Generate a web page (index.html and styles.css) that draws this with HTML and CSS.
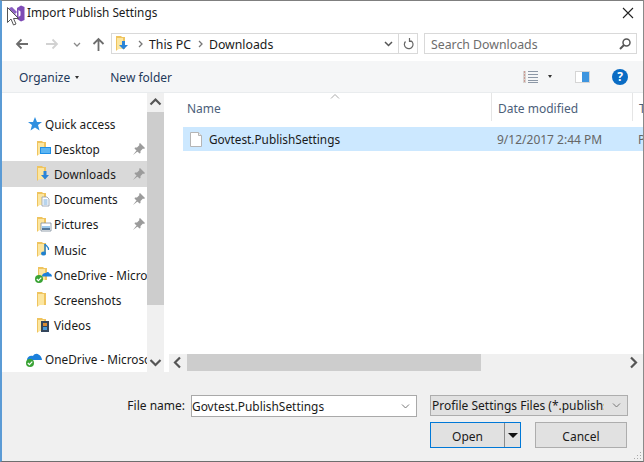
FILE: index.html
```html
<!DOCTYPE html>
<html lang="en">
<head>
    <meta charset="UTF-8">
    <title>Import Publish Settings</title>
    <link rel="stylesheet" href="styles.css">
</head>
<body>
    <svg width="0" height="0" class="defs">
        <symbol id="folder" viewBox="0 0 9 15">
            <path d="M0 0h5l1 1h3v12H2l-2 2z" fill="#efc45f"/>
            <path d="M1 2h6v11H3l-2 1z" fill="#fce6a0"/>
        </symbol>
        <symbol id="pin" viewBox="0 0 12 12">
            <path d="M7 0l5 5-1 1-1-.5L7.500 8 7.500 10 6.500 10.500 1.500 5.500 2 4.500 4 4.500 6.500 2 6 1zM3.500 7.500L0 12l4.500-3.500z" fill="#9b9b9b"/>
        </symbol>
        <symbol id="check" viewBox="0 0 8 8">
            <circle cx="4" cy="4" r="4" fill="#3aa335"/>
            <path d="M1.800 4l1.600 1.600L6.300 2.600" fill="none" stroke="#fff" stroke-width="1.200"/>
        </symbol>
    </svg>

    <div class="window">
        <header class="titlebar">
            <svg class="logo" width="17" height="17" viewBox="0 0 17 17">
                <path d="M1 4l8 9" stroke="#8a5fc0" stroke-width="2.500" fill="none"/>
                <path d="M1 3l3-1 5 5-2 2z" fill="#8a5fc0"/>
                <path d="M9 3l4-2.500 3.500 1.500v13l-3.500 1.500-4-2.500z" fill="#7d4bb5"/>
                <path d="M10.500 5v7l2-1.500v-4z" fill="#fff"/>
            </svg>
            <span class="title-text">Import Publish Settings</span>
            <svg class="close" width="12" height="12" viewBox="0 0 12 12">
                <path d="M1 1l10 10M11 1L1 11" stroke="#222" stroke-width="1.100"/>
            </svg>
        </header>

        <div class="navbar">
            <svg class="nav-icon back" width="14" height="12" viewBox="0 0 14 12">
                <path d="M13 6H2M6.500 1.500L2 6l4.500 4.500" fill="none" stroke="#6d6d6d" stroke-width="1.800"/>
            </svg>
            <svg class="nav-icon forward" width="14" height="12" viewBox="0 0 14 12">
                <path d="M1 6h11M7.500 1.500L12 6l-4.500 4.500" fill="none" stroke="#d2d2d2" stroke-width="1.800"/>
            </svg>
            <svg class="nav-icon recent" width="8" height="5" viewBox="0 0 8 5">
                <path d="M1 1l3 3 3-3" fill="none" stroke="#8a8a8a" stroke-width="1.300"/>
            </svg>
            <svg class="nav-icon up" width="13" height="14" viewBox="0 0 13 14">
                <path d="M6.500 14V2M1.500 7l5-5 5 5" fill="none" stroke="#6d6d6d" stroke-width="1.800"/>
            </svg>
            <div class="address">
                <svg class="addr-folder" width="14" height="15" viewBox="0 0 14 15">
                    <use href="#folder" width="9" height="15"/>
                    <path d="M6 5h3v4h3l-4.500 4.500L3 9h3z" fill="#2a84d8"/>
                </svg>
                <svg class="crumb-sep" width="5" height="8" viewBox="0 0 5 8"><path d="M1 1l3 3-3 3" fill="none" stroke="#777" stroke-width="1.300"/></svg>
                <span>This PC</span>
                <svg class="crumb-sep" width="5" height="8" viewBox="0 0 5 8"><path d="M1 1l3 3-3 3" fill="none" stroke="#777" stroke-width="1.300"/></svg>
                <span>Downloads</span>
                <svg class="addr-drop" width="9" height="6" viewBox="0 0 9 6"><path d="M1 1l3.500 3.500L8 1" fill="none" stroke="#555" stroke-width="1.500"/></svg>
                <div class="addr-refresh">
                    <svg width="11" height="12" viewBox="0 0 11 12"><path d="M7.500 2.500A4.300 4.300 0 1 1 2.500 3.500M6.500 0v3.500h3" fill="none" stroke="#666" stroke-width="1.200"/></svg>
                </div>
            </div>
            <div class="search">
                <span>Search Downloads</span>
                <svg width="12" height="12" viewBox="0 0 12 12"><circle cx="7.500" cy="4.500" r="3.500" fill="none" stroke="#555" stroke-width="1.500"/><path d="M5 7l-4 4" stroke="#555" stroke-width="2"/></svg>
            </div>
        </div>

        <div class="toolbar">
            <span class="tool organize">Organize</span>
            <i class="caret organize-caret"></i>
            <span class="tool">New folder</span>
            <svg class="views" width="16" height="14" viewBox="0 0 16 14">
                <path d="M0 1h3v12H0z" fill="#d8d4d0"/>
                <path d="M1 2h1M1 5h1M1 8h1M1 11h1" stroke="#c0605a"/>
                <path d="M5 1.500h10M5 4.500h10M5 7.500h10M5 10.500h10M5 12.500h10" stroke="#8c97a6"/>
            </svg>
            <i class="caret views-caret"></i>
            <svg class="pane" width="15" height="12" viewBox="0 0 15 12">
                <rect width="15" height="12" fill="#d5d5d5"/>
                <rect x="1" y="1" width="6" height="10" fill="#fff"/>
                <rect x="7" y="1" width="7" height="10" fill="#3e95df"/>
            </svg>
            <div class="help">?</div>
        </div>

        <div class="panes">
            <nav class="sidebar">
                <div class="tree">
                    <div class="row top quick">
                        <svg class="row-icon" width="14" height="14" viewBox="0 0 14 14"><path d="M7 0l2 5h5l-4 3 1.500 5.500L7 10.500 2.500 13.500 4 8 0 5h5z" fill="#2f8fe0"/></svg>
                        <span>Quick access</span>
                    </div>
                    <div class="row">
                        <svg class="row-icon" width="15" height="15" viewBox="0 0 15 15"><use href="#folder" width="9" height="15"/><path d="M3 6h11v7H3z" fill="#1f8fe6"/><path d="M4 7h9v5H4z" fill="#5cb5f2"/></svg>
                        <span>Desktop</span>
                        <svg class="pin" width="12" height="12"><use href="#pin"/></svg>
                    </div>
                    <div class="row active">
                        <svg class="row-icon" width="15" height="15" viewBox="0 0 15 15"><use href="#folder" width="9" height="15"/><path d="M6.500 5h3v4H12l-4 4.500L4 9h2.500z" fill="#2a84d8"/></svg>
                        <span>Downloads</span>
                        <svg class="pin" width="12" height="12"><use href="#pin"/></svg>
                    </div>
                    <div class="row">
                        <svg class="row-icon" width="15" height="15" viewBox="0 0 15 15"><use href="#folder" width="9" height="15"/><path d="M5 5h5l2 2v7H5z" fill="#fff" stroke="#8d9bab" stroke-width=".8"/><path d="M6.500 8h4M6.500 10h4M6.500 12h4" stroke="#4d93d0" stroke-width=".8"/></svg>
                        <span>Documents</span>
                        <svg class="pin" width="12" height="12"><use href="#pin"/></svg>
                    </div>
                    <div class="row">
                        <svg class="row-icon" width="15" height="15" viewBox="0 0 15 15"><use href="#folder" width="9" height="15"/><path d="M4 6h10v8H4z" fill="#fff" stroke="#7c8a99" stroke-width=".8"/><path d="M5 9h8v2H5z" fill="#9cc9ec"/><path d="M5 11h8v2H5z" fill="#55799b"/></svg>
                        <span>Pictures</span>
                        <svg class="pin" width="12" height="12"><use href="#pin"/></svg>
                    </div>
                    <div class="row">
                        <svg class="row-icon" width="15" height="15" viewBox="0 0 15 15"><use href="#folder" width="9" height="15"/><path d="M8 2v9.500" stroke="#1f80d0" stroke-width="1.400"/><ellipse cx="6.500" cy="11.500" rx="2.500" ry="2" fill="#1f80d0"/><path d="M8 2c1 2 4 2.500 3.500 6" fill="none" stroke="#1f80d0" stroke-width="1.200"/></svg>
                        <span>Music</span>
                    </div>
                    <div class="row">
                        <svg class="row-icon wide" width="17" height="16" viewBox="0 0 17 16"><use href="#folder" x="3" width="9" height="15"/><path d="M7 9c0-2 2-3.500 4-3 1-1.500 3-1 3.500 .5C16 6.500 17 8 17 9.500H7z" fill="#1c80dc"/><use href="#check" y="8" width="8" height="8"/></svg>
                        <span>OneDrive - Microsoft</span>
                    </div>
                    <div class="row">
                        <svg class="row-icon" width="15" height="15" viewBox="0 0 15 15"><use href="#folder" width="9" height="15"/></svg>
                        <span>Screenshots</span>
                    </div>
                    <div class="row">
                        <svg class="row-icon" width="15" height="15" viewBox="0 0 15 15"><use href="#folder" width="9" height="15"/><path d="M4 3h8v11H4z" fill="#33465c"/><path d="M6 5h4v3H6z" fill="#d78b32"/><path d="M6 9h4v3H6z" fill="#4a9bd8"/></svg>
                        <span>Videos</span>
                    </div>
                    <div class="row top drive">
                        <svg class="row-icon drive-icon" width="16" height="15" viewBox="0 0 16 15"><path d="M1 8c0-3 3-5 6-4 1-2 4-3 5.500-1.500C14 3 16 5.500 16 8z" fill="#1c80dc"/><use href="#check" y="7" width="8" height="8"/></svg>
                        <span>OneDrive - Microsoft</span>
                    </div>
                </div>
                <div class="vscroll">
                    <svg class="scroll-arrow" width="17" height="19" viewBox="0 0 17 19"><path d="M3.500 11.500l5-5 5 5" fill="none" stroke="#555" stroke-width="2.200"/></svg>
                    <div class="vthumb"></div>
                    <div class="vtrack"></div>
                    <svg class="scroll-arrow" width="17" height="19" viewBox="0 0 17 19"><path d="M3.500 7l5 5 5-5" fill="none" stroke="#555" stroke-width="2.200"/></svg>
                </div>
            </nav>

            <section class="files">
                <div class="columns">
                    <svg class="sort" width="10" height="5" viewBox="0 0 10 5"><path d="M1 4.500l4-4 4 4" fill="none" stroke="#aaa"/></svg>
                    <div class="col col-name">Name</div>
                    <div class="col col-date">Date modified</div>
                    <div class="col col-type">Type</div>
                </div>
                <div class="file-row">
                    <div class="col-name file-name">
                        <svg width="12" height="15" viewBox="0 0 12 15"><path d="M.5.500h8l3 3v11H.500z" fill="#fff" stroke="#b5b5b5"/><path d="M8.500.500v3h3" fill="#eee" stroke="#b5b5b5"/></svg>
                        <span>Govtest.PublishSettings</span>
                    </div>
                    <div class="col-date file-meta">9/12/2017 2:44 PM</div>
                    <div class="col-type file-meta">PUBLISHSETTINGS</div>
                </div>
                <div class="files-empty"></div>
                <div class="hscroll">
                    <svg width="18" height="17" viewBox="0 0 18 17"><path d="M11 3.500l-5 5 5 5" fill="none" stroke="#555" stroke-width="2.200"/></svg>
                    <div class="hthumb"></div>
                    <div class="htrack"></div>
                    <svg width="18" height="17" viewBox="0 0 18 17"><path d="M6 3.500l5 5-5 5" fill="none" stroke="#555" stroke-width="2.200"/></svg>
                </div>
            </section>
        </div>

        <footer class="bottom">
            <div class="bottom-row">
                <label class="file-label">File name:</label>
                <div class="name-input">
                    <span>Govtest.PublishSettings</span>
                    <svg width="9" height="5" viewBox="0 0 9 5"><path d="M1 .5l3.500 3.500L8 .5" fill="none" stroke="#777"/></svg>
                </div>
                <div class="filter">
                    <span>Profile Settings Files (*.publishsettings)</span>
                    <svg width="9" height="5" viewBox="0 0 9 5"><path d="M1 .5l3.500 3.500L8 .5" fill="none" stroke="#777"/></svg>
                </div>
            </div>
            <div class="button-row">
                <div class="btn-open">
                    <span class="open-label">Open</span>
                    <div class="open-drop"><i class="drop-tri"></i></div>
                </div>
                <div class="btn-cancel">Cancel</div>
            </div>
            <svg class="grip" width="9" height="9" viewBox="0 0 9 9">
                <path d="M7 1h1v1H7zM4 4h1v1H4zM7 4h1v1H7zM1 7h1v1H1zM4 7h1v1H4zM7 7h1v1H7z" fill="#a9a9a9"/>
            </svg>
        </footer>

        <svg class="cursor" width="13" height="19" viewBox="0 0 13 19">
            <path d="M.5.500v15l3.500-3.500 2.500 6 2.500-1-2.500-5.500h5z" fill="#fff" stroke="#555"/>
        </svg>
    </div>
</body>
</html>
```

FILE: styles.css
```css
*{
    box-sizing: border-box;
}
html, body{
    height: 100%;
}
body{
    margin: 0;
    overflow: hidden;
    background-color: white;
    color: #1a1a1a;
    font-family: 'Noto Sans', 'Open Sans', sans-serif;
    font-size: 12px;
}
.defs{
    position: absolute;
}

.window{
    position: relative;
    width: 644px;
    height: 462px;
    display: flex;
    flex-direction: column;
    border-top: 1px solid #7f7f7f;
    border-right: 1px solid #8a8a8a;
    border-bottom: 1px solid #6e6e6e;
    border-left: 2px solid #5b9bd5;
    overflow: hidden;
}

/* title */
.titlebar{
    height: 29px;
    display: flex;
    align-items: center;
    flex: none;
    padding-left: 6px;
}
.logo{
    margin-right: 2px;
    margin-top: -5px;
}
.title-text{
    margin-top: -8px;
    font-size: 11.8px;
}
.close{
    margin-left: auto;
    margin-right: 9px;
    margin-top: -6px;
}

/* back, forward, address, search */
.navbar{
    height: 31px;
    flex: none;
    display: flex;
    align-items: flex-start;
    padding-top: 3px;
}
.nav-icon{
    flex: none;
    margin-top: 5px;
}
.back{
    margin-left: 13px;
}
.forward{
    margin-left: 16px;
}
.recent{
    margin-left: 14px;
    margin-top: 9px;
}
.up{
    margin-left: 11px;
    margin-top: 4px;
}
.address{
    margin-left: 6px;
    width: 307px;
    height: 21px;
    border: 1px solid #d9d9d9;
    display: flex;
    align-items: center;
    padding-left: 4px;
    font-size: 12.3px;
}
.addr-folder{
    margin-right: 8px;
}
.crumb-sep{
    margin: 0 6px 0 0;
}
.address span{
    margin-right: 7px;
    padding-top: 1px;
}
.addr-drop{
    margin-left: auto;
    margin-right: 5px;
}
.addr-refresh{
    width: 19px;
    height: 100%;
    border-left: 1px solid #d9d9d9;
    display: flex;
    align-items: center;
    justify-content: center;
}
.search{
    margin-left: 6px;
    width: 213px;
    height: 21px;
    border: 1px solid #d9d9d9;
    display: flex;
    align-items: center;
    justify-content: space-between;
    padding: 0 5px 0 6px;
    color: #6d6d6d;
    font-size: 12.3px;
}
.search span{
    padding-top: 1px;
}

/* command bar */
.toolbar{
    height: 32px;
    flex: none;
    display: flex;
    align-items: center;
    background-color: #f5f6f7;
    border-bottom: 1px solid #e9ecee;
    color: #1e395b;
    padding-left: 17px;
}
.tool{
    padding-top: 2px;
}
.organize-caret{
    margin: 2px 31px 0 5px;
}
.caret{
    width: 0;
    height: 0;
    border-left: 2.5px solid transparent;
    border-right: 2.5px solid transparent;
    border-top: 3px solid #333;
}
.views{
    margin-left: 351px;
}
.views-caret{
    margin-left: 9px;
}
.pane{
    margin-left: 23px;
}
.help{
    margin-left: 22px;
    width: 16px;
    height: 16px;
    border-radius: 50%;
    background-color: #0a6cc4;
    color: white;
    font-weight: bold;
    font-size: 12px;
    line-height: 16px;
    text-align: center;
}

/* main panes */
.panes{
    flex: 1;
    min-height: 0;
    display: flex;
}
.sidebar{
    width: 162px;
    flex: none;
    display: flex;
}
.tree{
    width: 145px;
    flex: none;
    padding-top: 18px;
    overflow: hidden;
    font-size: 11.8px;
}
.row{
    height: 25.2px;
    display: flex;
    align-items: center;
    padding-left: 35px;
    white-space: nowrap;
    overflow: hidden;
}
.row-icon{
    flex: none;
    margin-right: 2px;
}
.row span{
    flex: none;
}
.row-icon.wide{
    margin-left: -2px;
}
.row.top{
    padding-left: 26px;
}
.row.quick .row-icon{
    margin-right: 3px;
}
.row.drive{
    margin-top: 9px;
    padding-left: 24px;
}
.row .drive-icon{
    margin-right: 3px;
}
.row.active{
    background-color: #d9d9d9;
}
.pin{
    position: absolute;
    left: 131px;
}
.vscroll{
    width: 17px;
    flex: none;
    display: flex;
    flex-direction: column;
    background-color: #f0f0f0;
}
.scroll-arrow{
    flex: none;
}
.vthumb{
    height: 193px;
    flex: none;
    background-color: #cdcdcd;
}
.vtrack{
    flex: 1;
}

.files{
    flex: 1;
    min-width: 0;
    display: flex;
    flex-direction: column;
    overflow: hidden;
}
.columns{
    position: relative;
    height: 29px;
    flex: none;
    display: flex;
    color: #4c607a;
    margin-left: 19px;
}
.sort{
    position: absolute;
    left: 147px;
    top: 1px;
}
.col{
    height: 28px;
    padding-top: 7px;
    white-space: nowrap;
}
.col-name{
    width: 308px;
    flex: none;
    padding-left: 4px;
}
.col-date{
    width: 141px;
    flex: none;
    padding-left: 6px;
    white-space: nowrap;
}
.col-type{
    width: 100px;
    flex: none;
    padding-left: 6px;
    white-space: nowrap;
}
.col.col-date, .col.col-type{
    border-left: 1px solid #e5e5e5;
}
.file-row{
    height: 24px;
    flex: none;
    display: flex;
    align-items: center;
    margin-top: 5px;
    margin-left: 19px;
    background-color: #cce8ff;
}
.file-name{
    display: flex;
    align-items: center;
    gap: 7px;
    padding-left: 7px;
    font-size: 11.8px;
}
.file-meta{
    color: #666;
}
.files-empty{
    flex: 1;
}
.hscroll{
    height: 18px;
    flex: none;
    display: flex;
    background-color: #f0f0f0;
    margin-left: 5px;
}
.hthumb{
    width: 294px;
    flex: none;
    background-color: #cdcdcd;
    margin-bottom: 1px;
}
.htrack{
    flex: 1;
}

/* bottom form */
.bottom{
    position: relative;
    height: 89px;
    flex: none;
    background-color: #f0f0f0;
    padding-top: 23px;
}
.bottom-row{
    display: flex;
    align-items: flex-start;
    height: 22px;
}
.file-label{
    width: 183px;
    flex: none;
    text-align: right;
    line-height: 22px;
}
.name-input{
    margin-left: 6px;
    width: 226px;
    height: 22px;
    background-color: white;
    border: 1px solid #a9a9a9;
    display: flex;
    align-items: center;
    justify-content: space-between;
    padding: 0 6px 0 0;
    font-size: 11.9px;
}
.filter{
    margin-left: 13px;
    width: 198px;
    height: 21px;
    background-color: #e1e1e1;
    border: 1px solid #adadad;
    display: flex;
    align-items: center;
    padding: 0 6px 0 1px;
}
.filter span{
    flex: 1;
    min-width: 0;
    overflow: hidden;
    white-space: nowrap;
}
.filter svg{
    flex: none;
    margin-left: 8px;
}
.button-row{
    display: flex;
    margin-top: 5px;
    margin-left: 428px;
    gap: 14px;
}
.btn-open{
    width: 91px;
    height: 26px;
    display: flex;
    background-color: #e1e1e1;
    border: 1px solid #0078d7;
}
.open-label{
    flex: 1;
    text-align: center;
    line-height: 27px;
}
.open-drop{
    width: 16px;
    border-left: 1px solid #8a8a8a;
    display: flex;
    align-items: center;
    justify-content: center;
}
.drop-tri{
    width: 0;
    height: 0;
    border-left: 5px solid transparent;
    border-right: 5px solid transparent;
    border-top: 5px solid #111;
}
.btn-cancel{
    width: 92px;
    height: 26px;
    line-height: 27px;
    text-align: center;
    background-color: #e1e1e1;
    border: 1px solid #adadad;
}
.grip{
    position: absolute;
    right: 1px;
    bottom: 1px;
}

.cursor{
    position: absolute;
    left: 5px;
    top: 6px;
}
```
